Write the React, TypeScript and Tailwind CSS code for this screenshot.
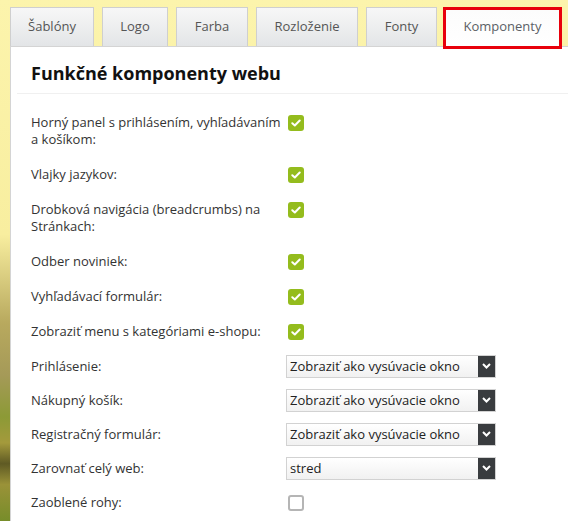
import React from "react";

const font = { fontFamily: '"Open Sans", "Noto Sans", sans-serif' };

function Check({ on }: { on: boolean }) {
  if (!on)
    return (
      <div className="w-[16px] h-[16px] rounded-[3px] border-2 border-[#b5b5b5] bg-white" />
    );
  return (
    <div className="w-[16px] h-[16px] rounded-[3px] bg-[#94bc1d] flex items-center justify-center">
      <svg width="10" height="8" viewBox="0 0 10 8">
        <path d="M1.3 4.2 L3.8 6.5 L8.7 1.5" fill="none" stroke="white" strokeWidth="2" strokeLinecap="round" strokeLinejoin="round" />
      </svg>
    </div>
  );
}

function Select({ value }: { value: string }) {
  return (
    <div className="w-[210px] h-[23px] border border-[#d2d2d2] flex bg-gradient-to-b from-white to-[#f1f1f1]">
      <div className="flex-1 pl-[3px] text-[13px] leading-[21px] text-[#222]">{value}</div>
      <div className="w-[17px] h-full bg-[#393c3f] flex items-center justify-center">
        <svg width="9" height="6" viewBox="0 0 9 6">
          <path d="M1 1 L4.5 4.5 L8 1" fill="none" stroke="white" strokeWidth="2" />
        </svg>
      </div>
    </div>
  );
}

type Row = { label: string; kind: "check" | "uncheck" | "select"; value?: string; two?: boolean };

const rows: Row[] = [
  { label: "Horný panel s prihlásením, vyhľadávaním a košíkom:", kind: "check", two: true },
  { label: "Vlajky jazykov:", kind: "check" },
  { label: "Drobková navigácia (breadcrumbs) na Stránkach:", kind: "check", two: true },
  { label: "Odber noviniek:", kind: "check" },
  { label: "Vyhľadávací formulár:", kind: "check" },
  { label: "Zobraziť menu s kategóriami e-shopu:", kind: "check" },
  { label: "Prihlásenie:", kind: "select", value: "Zobraziť ako vysúvacie okno" },
  { label: "Nákupný košík:", kind: "select", value: "Zobraziť ako vysúvacie okno" },
  { label: "Registračný formulár:", kind: "select", value: "Zobraziť ako vysúvacie okno" },
  { label: "Zarovnať celý web:", kind: "select", value: "stred" },
  { label: "Zaoblené rohy:", kind: "uncheck" },
];

const tabs = [
  { t: "Šablóny", w: "w-[84px]" },
  { t: "Logo", w: "w-[66px]" },
  { t: "Farba", w: "w-[72px]" },
  { t: "Rozloženie", w: "w-[102px]" },
  { t: "Fonty", w: "w-[71px]" },
];

export default function App() {
  return (
    <div
      className="w-[568px] h-[521px] overflow-hidden bg-[linear-gradient(to_bottom,#fcf4ac_0%,#f8ee9f_45%,#b8a95e_62%,#a59a58_72%,#8c9a36_80%,#a49a3c_85%,#5f5a24_89%,#9a9238_93%,#778d2a_100%)] pl-[10px] pt-[7px]"
      style={font}
    >
      <div className="flex items-start h-[39px]">
        {tabs.map((tb, i) => (
          <div
            key={i}
            className={`${tb.w} h-[39px] mr-[8px] border border-b-0 border-[#cfcfcf] bg-gradient-to-b from-[#f7f7f7] to-[#e3e5e7] flex items-center justify-center text-[13px] text-[#555]`}
          >
            {tb.t}
          </div>
        ))}
        <div className="relative z-10 -ml-[2px] w-[119px] h-[42px] border-[3px] border-[#e8000b] bg-gradient-to-b from-[#fcfcfc] to-white flex items-center justify-center text-[13px] text-[#5b5f66] pb-[3px]">
          Komponenty
        </div>
      </div>
      <div className="bg-white border-l border-t border-[#d4d4d4] h-[500px]">
        <div className="pl-[20px] pt-[14px] pb-[8px] ml-0">
          <div className="text-[18px] leading-[24px] font-bold text-[#111]">Funkčné komponenty webu</div>
        </div>
        <div className="ml-[6px] border-t border-[#f0f0f0]" />
        <div className="pt-[11px] pl-[20px]">
          {rows.map((r, i) => {
            if (r.two)
              return (
                <div key={i} className="flex items-start py-[9px]">
                  <div className="w-[257px] pr-[4px] text-[13px] leading-[17px] text-[#333]">{r.label}</div>
                  <div className="mt-[1px]">
                    <Check on />
                  </div>
                </div>
              );
            return (
              <div key={i} className={`flex items-center ${r.kind === "select" ? "h-[34px]" : "h-[35px]"}`}>
                <div className={`${r.kind === "select" ? "w-[255px]" : "w-[257px]"} text-[13px] leading-[17px] text-[#333]`}>{r.label}</div>
                {r.kind === "select" ? <Select value={r.value!} /> : <Check on={r.kind === "check"} />}
              </div>
            );
          })}
        </div>
      </div>
    </div>
  );
}
